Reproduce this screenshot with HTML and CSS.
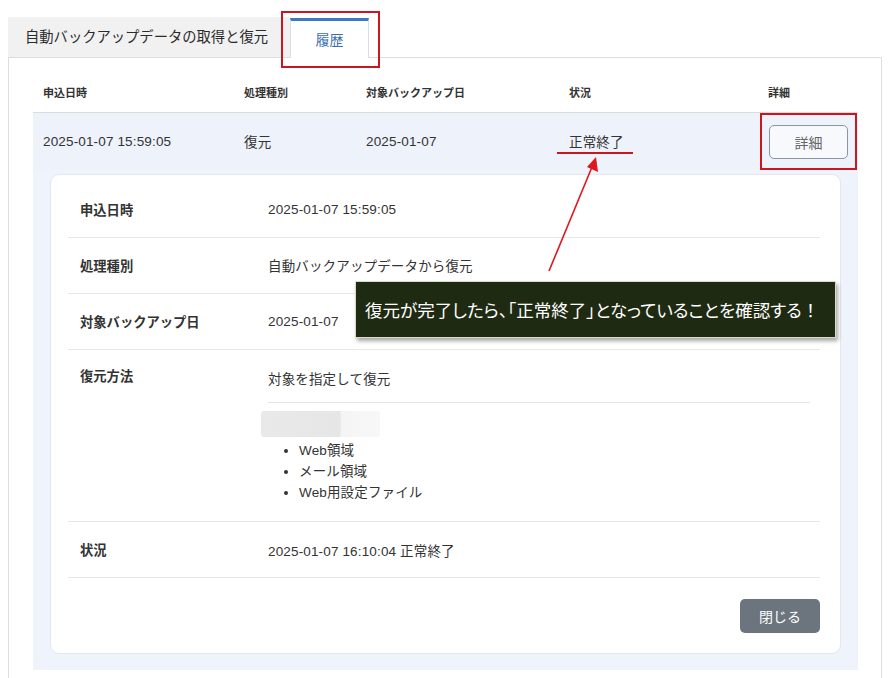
FILE: index.html
```html
<!DOCTYPE html>
<html lang="ja">
<head>
<meta charset="utf-8">
<link rel="stylesheet" href="styles.css">
</head>
<body>
<div class="page">
  <div class="tabs">
    <div class="tab">自動バックアップデータの取得と復元</div>
    <div class="tab active">履歴</div>
  </div>
  <div class="panel">
    <div class="thead">
      <div class="cell">申込日時</div>
      <div class="cell">処理種別</div>
      <div class="cell">対象バックアップ日</div>
      <div class="cell">状況</div>
      <div class="cell">詳細</div>
    </div>
    <div class="trow">
      <div class="cell">2025-01-07 15:59:05</div>
      <div class="cell cjk">復元</div>
      <div class="cell">2025-01-07</div>
      <div class="cell cjk">正常終了</div>
      <div class="cell"><button class="btn-detail">詳細</button></div>
    </div>
    <div class="expand">
      <div class="card">
        <div class="drow">
          <div class="dlabel">申込日時</div>
          <div class="dvalue">2025-01-07 15:59:05</div>
        </div>
        <div class="drow">
          <div class="dlabel">処理種別</div>
          <div class="dvalue cjk">自動バックアップデータから復元</div>
        </div>
        <div class="drow">
          <div class="dlabel">対象バックアップ日</div>
          <div class="dvalue">2025-01-07</div>
        </div>
        <div class="drow method">
          <div class="dlabel">復元方法</div>
          <div class="dvalue">
            <div class="mtitle cjk">対象を指定して復元</div>
            <div class="blurbox"></div>
            <ul class="mlist">
              <li>Web領域</li>
              <li>メール領域</li>
              <li>Web用設定ファイル</li>
            </ul>
          </div>
        </div>
        <div class="drow">
          <div class="dlabel">状況</div>
          <div class="dvalue">2025-01-07 16:10:04 正常終了</div>
        </div>
        <div class="cfoot">
          <button class="btn-close">閉じる</button>
        </div>
      </div>
    </div>
  </div>

  <div class="mark mark-tab"></div>
  <div class="mark mark-btn"></div>
  <div class="underline"></div>
  <svg class="arrow" width="890" height="678" viewBox="0 0 890 678">
    <line x1="549" y1="271" x2="592" y2="167" stroke="#e0161c" stroke-width="1.6"/>
    <polygon points="596,157 598,172 587,167" fill="#e0161c"/>
  </svg>
  <div class="note">復元が完了したら、「正常終了」となっていることを確認する<span class="excl">！</span></div>
</div>
</body>
</html>
```
FILE: styles.css
```css
html, body {
  margin: 0;
  padding: 0;
  background: #fff;
  overflow: hidden;
}
.page {
  position: relative;
  width: 890px;
  height: 678px;
  overflow: hidden;
  font-family: "Liberation Sans", "Noto Sans CJK JP", sans-serif;
  color: #333;
}
.cjk {
  position: relative;
  top: -1px;
}
.tabs {
  display: flex;
  margin: 17px 0 0 8px;
  height: 40px;
}
.tab {
  width: 265px;
  padding-left: 17px;
  background: #f1f1f1;
  font-size: 14.3px;
  line-height: 40px;
  color: #2b2b2b;
}
.tab.active {
  width: 77px;
  padding: 0;
  background: #fff;
  border-top: 3px solid #3d78c2;
  border-left: 1px solid #ddd;
  border-right: 1px solid #ddd;
  color: #3a6fb3;
  text-align: center;
  line-height: 38px;
  font-size: 14px;
  height: 37px;
  margin-top: 1px;
}
.panel {
  margin: 0 8px;
  border: 1px solid #dedede;
  border-bottom: none;
  padding: 0 23px 40px 24px;
}
.thead, .trow {
  display: grid;
  grid-template-columns: 201px 122px 203px 199px 1fr;
}
.thead {
  height: 54px;
  border-bottom: 1px solid #dcdcdc;
  box-sizing: content-box;
  align-items: start;
}
.thead .cell {
  padding: 28px 0 0 10px;
  font-size: 11px;
  font-weight: bold;
  line-height: 14px;
  color: #333;
}
.trow {
  height: 57px;
  align-items: center;
  background: #eef2fb;
}
.trow .cell {
  padding-left: 10px;
  font-size: 13.5px;
  letter-spacing: 0.15px;
  color: #333;
}
.btn-detail {
  margin-left: 1px;
  width: 79px;
  height: 34px;
  border: 1px solid #8c97a4;
  border-radius: 5px;
  background: #f7f9fd;
  color: #666;
  font-family: "Noto Sans CJK JP", sans-serif;
  font-size: 14px;
  padding: 0;
}
.expand {
  background: #eff3fc;
  padding: 4px 17px 16px;
}
.card {
  background: #fff;
  border: 1px solid #e3e7ef;
  border-radius: 9px;
  padding: 7px 20px 20px 17px;
}
.drow {
  display: grid;
  grid-template-columns: 200px 1fr;
  height: 55px;
  align-items: center;
  border-bottom: 1px solid #e8e8e8;
}
.dlabel {
  padding-left: 12px;
  font-size: 13.3px;
  font-weight: bold;
  color: #333;
}
.dvalue {
  font-size: 13.5px;
  letter-spacing: 0.15px;
  color: #333;
}
.drow.method {
  height: auto;
  align-items: start;
}
.method .dlabel {
  padding-top: 17px;
  line-height: 20px;
}
.method .dvalue {
  padding: 21px 10px 18px 0;
}
.mtitle {
  line-height: 20px;
  padding-bottom: 12px;
  border-bottom: 1px solid #e4e4e4;
}
.blurbox {
  margin: 7px 0 0 -7px;
  width: 119px;
  height: 26px;
  background: linear-gradient(90deg, #e9e9e9 0%, #e6e6e6 66%, #f5f5f5 68%, #f7f7f7 100%);
  border-radius: 3px;
}
.mlist {
  margin: 3px 0 0;
  padding-left: 31px;
  line-height: 21px;
}
.cfoot {
  display: flex;
  justify-content: flex-end;
  padding-top: 21px;
}
.btn-close {
  width: 80px;
  height: 34px;
  border: none;
  border-radius: 5px;
  background: #6c757d;
  color: #fff;
  font-family: "Noto Sans CJK JP", sans-serif;
  font-size: 14px;
  padding: 0;
}
.mark {
  position: absolute;
  border: 2px solid #c9161f;
  box-sizing: border-box;
}
.mark-tab {
  left: 281px;
  top: 11px;
  width: 99px;
  height: 57px;
}
.mark-btn {
  left: 760px;
  top: 113px;
  width: 97px;
  height: 57px;
}
.underline {
  position: absolute;
  left: 557px;
  top: 152px;
  width: 76px;
  height: 2px;
  background: #c9161f;
}
.arrow {
  position: absolute;
  left: 0;
  top: 0;
}
.note {
  position: absolute;
  left: 355px;
  top: 281px;
  width: 481px;
  height: 57px;
  padding-left: 9px;
  box-sizing: border-box;
  background: #1f2a13;
  border: 1px solid #d8dccb;
  box-shadow: 2px 3px 4px rgba(0,0,0,0.35);
  color: #fff;
  font-family: "Noto Sans CJK JP", sans-serif;
  font-size: 17.5px;
  line-height: 55px;
  font-feature-settings: "palt";
  white-space: nowrap;
}
.excl {
  font-feature-settings: normal;
}
```
